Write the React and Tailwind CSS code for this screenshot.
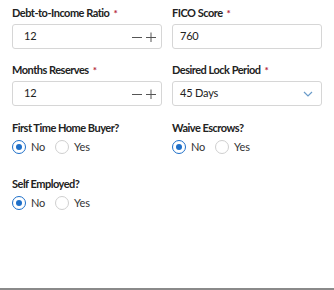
import React from "react";

const font = { fontFamily: 'Lato, "Noto Sans", sans-serif' };

function Label({ children, required }) {
  return (
    <div className="text-[11px] leading-[14px] font-bold tracking-[-0.5px] text-[#222] mb-[4px]">
      {children}
      {required && <span className="text-[#b3283a] ml-[4px] text-[10px]">*</span>}
    </div>
  );
}

function NumberInput({ value }) {
  return (
    <div className="h-[25px] border border-[#d6d6d6] rounded-[3px] bg-white flex items-center pl-[11px] pr-[5px]">
      <span className="text-[11px] tracking-[-0.2px] text-[#222] flex-1">{value}</span>
      <svg width="10" height="10" viewBox="0 0 10 10" className="mr-[4px]">
        <path d="M0 5.5h10" stroke="#555" strokeWidth="1" />
      </svg>
      <svg width="10" height="10" viewBox="0 0 10 10">
        <path d="M0 5.5h10M5 0.5v10" stroke="#555" strokeWidth="1" />
      </svg>
    </div>
  );
}

function TextInput({ value }) {
  return (
    <div className="h-[25px] border border-[#d6d6d6] rounded-[3px] bg-white flex items-center pl-[7px]">
      <span className="text-[11px] tracking-[-0.2px] text-[#222]">{value}</span>
    </div>
  );
}

function SelectInput({ value }) {
  return (
    <div className="h-[25px] border border-[#d6d6d6] rounded-[3px] bg-white flex items-center pl-[7px] pr-[8px]">
      <span className="text-[11px] tracking-[-0.2px] text-[#222] flex-1">{value}</span>
      <svg width="10" height="6" viewBox="0 0 10 6">
        <path d="M1 1l4 4 4-4" fill="none" stroke="#6a9bc9" strokeWidth="1.2" />
      </svg>
    </div>
  );
}

function Radio({ checked, label }) {
  return (
    <div className="flex items-center gap-[5px]">
      {checked ? (
        <span className="w-[14px] h-[14px] rounded-full border-[1.5px] border-[#1d6fc9] flex items-center justify-center">
          <span className="w-[6px] h-[6px] rounded-full bg-[#1d6fc9]" />
        </span>
      ) : (
        <span className="w-[14px] h-[14px] rounded-full border border-[#cfcfcf]" />
      )}
      <span className="text-[11px] tracking-[-0.2px] text-[#333]">{label}</span>
    </div>
  );
}

function RadioGroup({ label }) {
  return (
    <div>
      <div className="text-[11px] leading-[14px] font-bold tracking-[-0.5px] text-[#222] mb-[5px]">{label}</div>
      <div className="flex items-center gap-[10px] h-[14px]">
        <Radio checked label="No" />
        <Radio label="Yes" />
      </div>
    </div>
  );
}

export default function App() {
  return (
    <div style={font} className="w-[334px] h-[290px] bg-white border-b-2 border-[#8a8a8a] box-border">
      <div className="px-3 pt-[6px] grid grid-cols-2 gap-x-[10px]">
        <div>
          <Label required>Debt-to-Income Ratio</Label>
          <NumberInput value="12" />
        </div>
        <div>
          <Label required>FICO Score</Label>
          <TextInput value="760" />
        </div>
        <div className="mt-[14px]">
          <Label required>Months Reserves</Label>
          <NumberInput value="12" />
        </div>
        <div className="mt-[14px]">
          <Label required>Desired Lock Period</Label>
          <SelectInput value="45 Days" />
        </div>
        <div className="mt-[15px]">
          <RadioGroup label="First Time Home Buyer?" />
        </div>
        <div className="mt-[15px]">
          <RadioGroup label="Waive Escrows?" />
        </div>
        <div className="mt-[23px]">
          <RadioGroup label="Self Employed?" />
        </div>
      </div>
    </div>
  );
}
